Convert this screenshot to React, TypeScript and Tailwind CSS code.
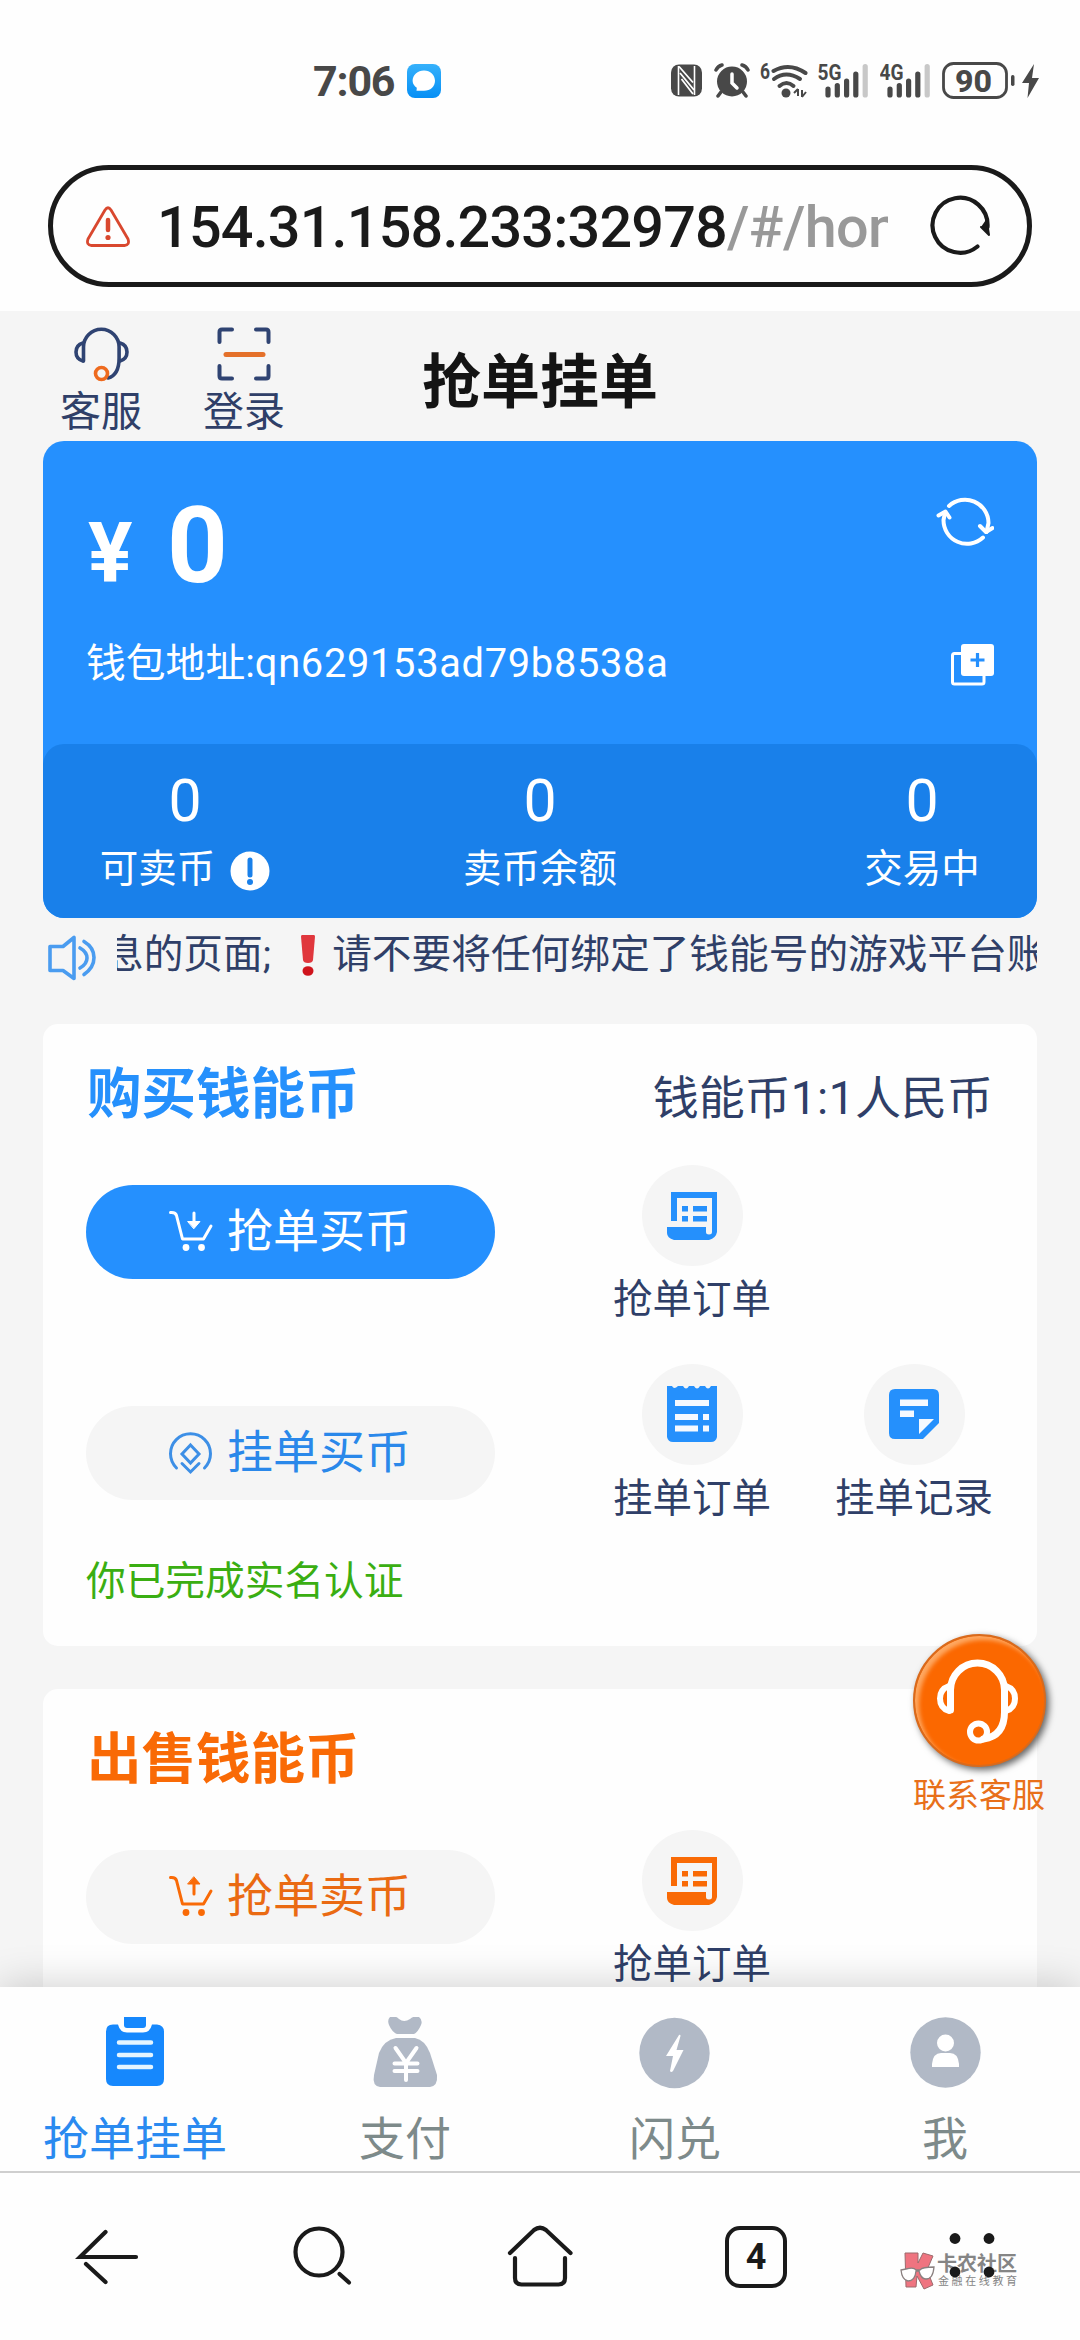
import React from "react";

const BLUE = "#2590fc";
const ORANGE = "#f96a06";
const GRAY = "#b1b9c6";
const INK = "#1a1a1a";

function StatusBar() {
  return (
    <div className="flex h-[165px] shrink-0 items-start pt-[60px] pr-[41px] pl-[313px] text-[#484848]">
      <span className="w-[94px] text-[43px] leading-[43px] font-bold tracking-[-1.2px]">7:06</span>
      <svg className="mt-[4px] h-[34px] w-[34px]" viewBox="0 0 34 34">
        <defs>
          <linearGradient id="chat" x1="0" y1="0" x2="0" y2="1">
            <stop offset="0" stopColor="#36b1fb" />
            <stop offset="1" stopColor="#068ff5" />
          </linearGradient>
        </defs>
        <rect width="34" height="34" rx="8" fill="url(#chat)" />
        <path d="M17 6.5c6.4 0 11 4.400 11 10.300s-4.600 10-11 10h-7.500l.3-3C7.500 22.200 5.600 19.800 5.600 16.800 5.600 10.900 10.600 6.500 17 6.500z" fill="#fff" />
      </svg>
      <div className="ml-auto flex">
        <svg className="h-[42px] w-[31px]" viewBox="671 60 31 42">
          <rect x="671" y="64.500" width="31" height="32" rx="8" fill="#484848" />
          <path d="M678.500 66v29M694.500 66v29" stroke="#fff" strokeWidth="1.600" fill="none" />
          <path d="M679 66.500l14 16M681.500 79l11.500 15M680 73l14 17" stroke="#fff" strokeWidth="1.800" fill="none" />
        </svg>
        <svg className="ml-[12px] h-[42px] w-[36px]" viewBox="714 60 36 42">
          <circle cx="732" cy="81.500" r="15" fill="#484848" />
          <path d="M716 70q2-4 6-5M748 70q-2-4-6-5M721 92l-3 4M743 92l3 4" stroke="#484848" strokeWidth="3.500" strokeLinecap="round" fill="none" />
          <path d="M732 74v9l5 5" stroke="#fff" strokeWidth="3.500" strokeLinecap="round" fill="none" />
        </svg>
        <svg className="ml-[10px] h-[42px] w-[48px]" viewBox="760 60 48 42">
          <text x="760" y="79" fontSize="22" fontWeight="700" fill="#484848" textLength="10" lengthAdjust="spacingAndGlyphs">6</text>
          <path d="M773.500 71q16-9 32 2" stroke="#484848" strokeWidth="4" strokeLinecap="round" fill="none" />
          <path d="M774 79q12-9 26 0M779.500 86q7-6 14 0" stroke="#484848" strokeWidth="4" strokeLinecap="round" fill="none" />
          <circle cx="786" cy="93" r="4.500" fill="#484848" />
          <path d="M798 89v7M794 93l4-4M802 90v7M802 97l4-5" stroke="#484848" strokeWidth="2" fill="none" />
        </svg>
        <Signal label="5G" className="ml-[10px]" />
        <Signal label="4G" className="ml-[12px]" />
        <svg className="ml-[12px] h-[42px] w-[97px]" viewBox="942 60 97 42">
          <rect x="943.500" y="63.500" width="63" height="34" rx="10" fill="none" stroke="#484848" strokeWidth="2.800" />
          <text x="955" y="91.500" fontSize="31" fontWeight="800" fill="#484848" textLength="37" lengthAdjust="spacingAndGlyphs">90</text>
          <rect x="1011" y="75" width="3.500" height="11" rx="1.700" fill="#484848" />
          <path d="M1034 64L1022 83h7l-1.500 15L1039 78h-7z" fill="#484848" />
        </svg>
      </div>
    </div>
  );
}

function Signal({ label, className }: { label: string; className: string }) {
  return (
    <svg className={"h-[42px] w-[50px] " + className} viewBox="818 60 50 42">
      <text x="817.500" y="80" fontSize="22" fontWeight="700" fill="#484848" textLength="24" lengthAdjust="spacingAndGlyphs">{label}</text>
      <path d="M828 89v6M837.300 85.500v9.500M846.600 81v14M855.800 74v21" stroke="#484848" strokeWidth="5.200" strokeLinecap="round" />
      <path d="M865.200 66.500V95" stroke="#c8c8c8" strokeWidth="5.200" strokeLinecap="round" />
    </svg>
  );
}

function AddressBar() {
  return (
    <div className="mx-[48px] mb-[24px] flex h-[122px] shrink-0 items-center rounded-full border-[5px] border-[#1a1a1a] pl-[33px] pr-[36px]">
      <svg className="h-[42px] w-[44px]" viewBox="86 204 44 42" fill="none" stroke="#d9482f" strokeWidth="2.800">
        <path d="M105 209q3-4.500 6 0l17 29q2 6-3.500 6.500h-33Q86 244 88 238z" strokeLinejoin="round" />
        <path d="M108 219v10" strokeWidth="4.500" strokeLinecap="round" />
        <circle cx="108" cy="236.500" r="2.600" fill="#d9482f" stroke="none" />
      </svg>
      <div className="mt-[4px] ml-[27px] w-[731px] overflow-hidden text-[57.500px] leading-[80px] font-medium whitespace-nowrap text-[#1a1a1a]">
        <span className="tracking-[-0.800px]">154.31.158.233:32978</span>
        <span className="tracking-[-0.600px] text-[#999]">/#/hom</span>
      </div>
      <svg className="ml-auto h-[62px] w-[62px]" viewBox="929 196 62 62" fill="none" stroke={INK} strokeWidth="4.200" strokeLinecap="round">
        <path d="M977.500 247.500A27.500 27.500 0 1 1 987.500 228" />
        <path d="M986.500 220l2.500 16-8-8" fill={INK} strokeWidth="2" strokeLinejoin="round" />
      </svg>
    </div>
  );
}

function Headset() {
  return (
    <svg className="h-[56px] w-[56px]" viewBox="73 326 56 56" fill="none" stroke="#2f4372" strokeWidth="3.600" strokeLinecap="round">
      <path d="M83.500 361V347a17.800 17.800 0 0 1 35.600 0v11q0 17-11 20" />
      <path d="M83 343q-7 2-7 9t7 9M120 343q7 2 7 9t-7 9" />
      <circle cx="101.500" cy="373.500" r="6" stroke="#ee6a1e" />
    </svg>
  );
}

function ScanIcon() {
  return (
    <svg className="h-[56px] w-[56px]" viewBox="216 326 56 56" fill="none" stroke="#2f4372" strokeWidth="4" strokeLinecap="round">
      <path d="M219.500 342V332q0-2.500 2.500-2.500h10M256 329.500h10q2.500 0 2.500 2.500v10M268.500 366v10q0 2.500-2.500 2.500h-10M232 378.500h-10q-2.500 0-2.500-2.500v-10" />
      <path d="M226 354.500h37" stroke="#e4702a" strokeWidth="5" />
    </svg>
  );
}

function Header() {
  return (
    <div className="grid h-[130px] grid-cols-[1fr_auto_1fr] pt-[15px]">
      <div className="flex gap-[53px] pl-[56px]">
        <div className="flex w-[90px] flex-col items-center">
          <Headset />
          <span className="mt-[5px] text-[41px] leading-[50px] text-[#2f3f68]">客服</span>
        </div>
        <div className="flex w-[90px] flex-col items-center">
          <ScanIcon />
          <span className="mt-[5px] text-[41px] leading-[50px] text-[#2f3f68]">登录</span>
        </div>
      </div>
      <h1 className="mt-[22px] text-[59px] leading-[70px] font-bold text-[#141414]">抢单挂单</h1>
      <div />
    </div>
  );
}

function Stat({ label, className, info }: { label: string; className: string; info?: boolean }) {
  return (
    <div className={"flex flex-col items-center pt-[27px] " + className}>
      <span className="text-[59px] leading-[60px]">0</span>
      <span className="mt-[13px] flex items-center text-[38.500px] leading-[50px]">
        {label}
        {info && (
          <svg className="mt-[3px] ml-[15px] h-[40px] w-[40px]" viewBox="0 0 40 40">
            <circle cx="20" cy="20" r="19.500" fill="#fff" />
            <path d="M20 9v15" stroke="#1980ea" strokeWidth="5" strokeLinecap="round" />
            <circle cx="20" cy="31" r="3" fill="#1980ea" />
          </svg>
        )}
      </span>
    </div>
  );
}

function WalletCard() {
  return (
    <div className="mx-[43px] h-[477px] overflow-hidden rounded-[21px] bg-[#2590fe] text-white">
      <div className="flex h-[303px] flex-col pr-[43px] pl-[43px]">
        <div className="mt-[50px] flex h-[110px] items-baseline font-bold">
          <span className="w-[81px] pl-[2px] text-[83px] leading-[110px]">¥</span>
          <span className="text-[106px] leading-[110px]">0</span>
          <svg className="ml-auto h-[58px] w-[58px] -translate-y-[31px]" viewBox="936 493 58 58" fill="none" stroke="#fff" strokeWidth="4" strokeLinecap="round" strokeLinejoin="round">
            <path d="M949 506a23.500 23.500 0 0 1 39.500 17l-2 9M983 537.500A23.500 23.500 0 0 1 943.500 520l1.500-7" />
            <path d="M938.500 515.500l7-4 4 6M980 526l6 6 6.500-4" />
          </svg>
        </div>
        <div className="mt-[38px] flex h-[50px] items-center">
          <span className="text-[39.800px] leading-[50px]">
            钱包地址:<span className="tracking-[0.700px]">qn629153ad79b8538a</span>
          </span>
          <svg className="mt-[2px] ml-auto h-[42px] w-[43px]" viewBox="0 0 43 42">
            <path d="M10 9.500H3.500q-2 0-2 2V38q0 2 2 2H31q2 0 2-2v-6" fill="none" stroke="#fff" strokeWidth="3" />
            <rect x="10" y="0" width="33" height="32" rx="3" fill="#fff" />
            <path d="M26.500 9v14M19.500 16h14" stroke="#2590fe" strokeWidth="3.200" />
          </svg>
        </div>
      </div>
      <div className="flex h-[174px] rounded-[21px] bg-[#1980ea]">
        <Stat label="可卖币" className="w-[284px]" info />
        <Stat label="卖币余额" className="w-[426px]" />
        <Stat label="交易中" className="w-[284px] pl-[54px]" />
      </div>
    </div>
  );
}

function Notice() {
  return (
    <div className="mr-[43px] ml-[47px] flex h-[106px] items-start pt-[11px]">
      <svg className="mt-[4px] h-[52px] w-[52px] shrink-0" viewBox="47 933 52 52" fill="none" stroke="#4a9cf0" strokeWidth="3.600" strokeLinecap="round" strokeLinejoin="round">
        <path d="M50 946.500h13l11-9v41l-11-8H50z" />
        <path d="M80 948q7 4 7 10t-7 10M84 941.500q10 6 10 16t-10 17" />
      </svg>
      <div className="ml-[18px] flex w-[920px] items-center overflow-hidden text-[39.700px] leading-[52px] whitespace-nowrap text-[#2f3f68]">
        <span className="-ml-[13px]">息的页面;</span>
        <svg className="mr-[15px] ml-[28px] h-[42px] w-[18px] shrink-0" viewBox="0 0 18 42">
          <path d="M3 1h12q1 0 1 1.500L14 26q-.5 3-5 3t-5-3L2 2.500Q2 1 3 1z" fill="#e0373d" />
          <ellipse cx="9" cy="37" rx="5.500" ry="4.800" fill="#cf141c" />
        </svg>
        <span>请不要将任何绑定了钱能号的游戏平台账</span>
      </div>
    </div>
  );
}

function CartIcon({ color, up }: { color: string; up?: boolean }) {
  return (
    <svg className="h-[46px] w-[46px]" viewBox="168 1208 46 46" fill="none" stroke={color} strokeWidth="3" strokeLinecap="round" strokeLinejoin="round">
      <path d="M170.500 1212.500q5-.5 6 3l6 23.500q20.500 0 21 0l7.500-13" />
      <circle cx="186" cy="1247.500" r="3.400" fill={color} stroke="none" />
      <circle cx="201.500" cy="1247.500" r="3.400" fill={color} stroke="none" />
      {up ? (
        <>
          <path d="M194 1229v-11" />
          <path d="M188 1219h12l-6-7z" fill={color} strokeWidth="1" />
        </>
      ) : (
        <>
          <path d="M194 1213v11" />
          <path d="M188 1221.500h12l-6 7z" fill={color} strokeWidth="1" />
        </>
      )}
    </svg>
  );
}

function CoinIcon() {
  return (
    <svg className="h-[46px] w-[46px]" viewBox="168 1429 46 46" fill="none" stroke="#3d8fe6" strokeWidth="3" strokeLinecap="round">
      <path d="M176.500 1468a20 20 0 1 1 28 0" />
      <path d="M190.500 1445l8.500 9-8.500 9-8.500-9zM182 1463.500l8.500 8.500 8.500-8.500" />
    </svg>
  );
}

function ScrollIcon({ color }: { color: string }) {
  return (
    <svg className="-ml-[1px] h-[48px] w-[50px]" viewBox="0 0 50 48" fill={color}>
      <path d="M4 0H50V40Q49 46 42 48H7Q0 46 0 41V35H39V40Q39 42.500 42 42.500Q45 42.500 45 40V6H10V29H4Z" />
      <path d="M15 14h6v5.500h-6zM26 14h14v5.500H26zM15 24h6v5.500h-6zM26 24h14v5.500H26z" />
    </svg>
  );
}

function ReceiptIcon() {
  return (
    <svg className="-mt-[1px] -ml-[1px] h-[56px] w-[50px]" viewBox="0 0 50 56">
      <path d="M0 0h5q2 4 6 0h5q3 5 6 0h5q3 5 6 0h5q3 5 6 0h6v51q-1 5-6 5H6q-5 0-6-5z" fill={BLUE} />
      <path d="M8 14h34v6H8zM8 28h23v6H8zM36 28h6v6h-6zM8 39.500h23v6H8zM36 39.500h6v6h-6z" fill="#f5f9ff" />
    </svg>
  );
}

function NoteIcon() {
  return (
    <svg className="-mt-[1px] -ml-[1px] h-[50px] w-[50px]" viewBox="0 0 50 50">
      <path d="M6 0h38q6 0 6 6v28L34 50H6q-6 0-6-6V6q0-6 6-6z" fill={BLUE} />
      <path d="M11 10.500h28v6.500H11zM11 21.500h14v6.500H11zM30 30h15L30 45z" fill="#f5f9ff" />
    </svg>
  );
}

function Shortcut({ label, children }: { label: string; children: React.ReactNode }) {
  return (
    <div className="flex w-[160px] flex-col items-center">
      <div className="flex h-[101px] w-[101px] items-center justify-center rounded-full bg-[#f5f5f5]">{children}</div>
      <span className="mt-[10px] text-[39.500px] leading-[48px] whitespace-nowrap text-[#2f3f68]">{label}</span>
    </div>
  );
}

function Pill({ label, className, children }: { label: string; className: string; children: React.ReactNode }) {
  return (
    <div className={"mr-[117px] flex h-[94px] w-[409px] shrink-0 items-center pl-[82px] rounded-full " + className}>
      <span className="-mt-[2px] h-[46px]">{children}</span>
      <span className="-mt-[3px] ml-[13px] text-[46px] leading-[60px]">{label}</span>
    </div>
  );
}

function TradeCards() {
  return (
    <>
      <div className="mx-[43px] h-[622px] rounded-[15px] bg-[#fefefe] pl-[43px]">
        <div className="flex h-[134px] items-center justify-between pr-[44px]">
          <h2 className="mt-[5px] pl-[1px] text-[54.500px] leading-[60px] font-bold text-[#2590fc]">购买钱能币</h2>
          <span className="mt-[13px] text-[46px] leading-[60px] text-[#2f3f68]">
            钱能币<span className="tracking-[0.500px]">1:1</span>人民币
          </span>
        </div>
        <div className="flex h-[206px] pt-[7px]">
          <Pill label="抢单买币" className="mt-[20px] bg-[#2590fe] text-white">
            <CartIcon color="#fff" />
          </Pill>
          <Shortcut label="抢单订单">
            <ScrollIcon color={BLUE} />
          </Shortcut>
        </div>
        <div className="flex h-[192px]">
          <Pill label="挂单买币" className="mt-[42px] bg-[#f5f5f5] text-[#2a88ea]">
            <CoinIcon />
          </Pill>
          <div className="flex gap-[62px]">
            <Shortcut label="挂单订单">
              <ReceiptIcon />
            </Shortcut>
            <Shortcut label="挂单记录">
              <NoteIcon />
            </Shortcut>
          </div>
        </div>
        <p className="text-[39.700px] leading-[52px] text-[#3aae12]">你已完成实名认证</p>
      </div>
      <div className="mx-[43px] mt-[43px] h-[622px] rounded-[15px] bg-[#fefefe] pl-[43px]">
        <div className="flex h-[134px] items-center">
          <h2 className="mt-[5px] pl-[1px] text-[54.500px] leading-[60px] font-bold text-[#f96a06]">出售钱能币</h2>
        </div>
        <div className="flex h-[206px] pt-[7px]">
          <Pill label="抢单卖币" className="mt-[20px] bg-[#f5f5f5] text-[#ea6a12]">
            <CartIcon color={ORANGE} up />
          </Pill>
          <Shortcut label="抢单订单">
            <ScrollIcon color={ORANGE} />
          </Shortcut>
        </div>
      </div>
    </>
  );
}

function SupportButton() {
  return (
    <div className="absolute top-[1323px] right-[29px] flex w-[144px] flex-col items-center">
      <div className="flex h-[133px] w-[133px] items-center justify-center rounded-full border-2 border-[#d96a1c] bg-[#fb6800] shadow-[3px_3px_7px_rgba(0,0,0,0.6),inset_4px_4px_4px_rgba(255,190,130,0.75)]">
        <svg className="h-[90px] w-[90px]" viewBox="933 1655 90 90" fill="none" stroke="#fff" strokeWidth="7" strokeLinecap="round">
          <path d="M949.500 1709v-20a27 27 0 0 1 54 0v22q0 24-21 27" />
          <path d="M948 1685q-9 3-9 12.500t9 12.500M1005 1685q9 3 9 12.500t-9 12.500" strokeWidth="6" />
          <circle cx="977.500" cy="1731" r="8.500" strokeWidth="6" />
        </svg>
      </div>
      <span className="mt-[9px] text-[33px] leading-[40px] whitespace-nowrap text-[#e8701a]">联系客服</span>
    </div>
  );
}

function Tab({ label, active, children }: { label: string; active?: boolean; children: React.ReactNode }) {
  return (
    <div className="flex w-[270px] flex-col items-center pt-[30px]">
      <svg className="h-[74px] w-[74px]" viewBox="0 0 74 74">{children}</svg>
      <span className={"mt-[18px] text-[46px] leading-[60px] " + (active ? "text-[#2a8af0]" : "text-[#7d8a8a]")}>{label}</span>
    </div>
  );
}

function TabBar() {
  return (
    <div className="relative flex h-[186px] shrink-0 border-b-2 border-[#cfcfcf] bg-[#fefefe] shadow-[0_0_40px_rgba(0,0,0,0.2)] [clip-path:inset(-60px_0_0_0)]">
      <Tab label="抢单挂单" active>
        <path d="M15 7.500h5q2 8 9 8h16q7 0 9-8h5q7 1 7 7V62q0 7-7 7H15q-7 0-7-7V14.500q0-7 7-7z" fill="#1688fd" />
        <path d="M26 0h22v8q0 3-3 3H29q-3 0-3-3z" fill="#1688fd" />
        <path d="M21 25.500h32M21 38h32M21 50h32" stroke="#e4f5ff" strokeWidth="4.500" strokeLinecap="round" />
      </Tab>
      <Tab label="支付">
        <path d="M22 0q5-2 9 2 5 4 11 0 5-4 9-2 4 3 2 8-3 7-7 9H29q-5-2-8-9-2-5 1-8z" fill={GRAY} />
        <path d="M28 21h19q10 2 15 15l7 22q1 11-7 12H12q-8-1-6-12l5-22q5-13 17-15z" fill={GRAY} />
        <path d="M27.500 31L38 46l10.500-15M38 46v17M26.500 46.500h23M26.500 54h23" stroke="#fff" strokeWidth="4" strokeLinecap="round" fill="none" />
      </Tab>
      <Tab label="闪兑">
        <circle cx="36.500" cy="36" r="35.200" fill={GRAY} />
        <path d="M41 18L28 39h7l-3 15q1 2 3 0L45.500 33h-7l4-14q0-2-1.500-1z" fill="#fff" />
      </Tab>
      <Tab label="我">
        <circle cx="37.500" cy="35.500" r="35.200" fill={GRAY} />
        <circle cx="37.500" cy="26" r="8.500" fill="#fff" />
        <path d="M24 50v-3q1-11 9-11h9q8 0 9 11v3z" fill="#fff" />
      </Tab>
    </div>
  );
}

function BrowserNav() {
  return (
    <div className="flex h-[167px] shrink-0 items-start bg-[#fefefe] pt-[49px] pl-[75px]">
      <svg className="h-[70px] w-[66px]" viewBox="75 2222 66 70" fill="none" stroke={INK} strokeWidth="4.200" strokeLinecap="round">
        <path d="M105.500 2232L80 2257h56M86 2264l19.500 18" />
      </svg>
      <svg className="ml-[146px] h-[70px] w-[70px]" viewBox="287 2222 70 70" fill="none" stroke={INK} strokeWidth="4.200" strokeLinecap="round">
        <circle cx="319" cy="2252" r="23.500" />
        <path d="M339.500 2274l9.500 8.500" />
      </svg>
      <svg className="ml-[148px] h-[70px] w-[70px]" viewBox="505 2222 70 70" fill="none" stroke={INK} strokeWidth="4.200" strokeLinecap="round">
        <path d="M510 2253l24-23q6-4.500 12 0l24.500 23" />
        <path d="M515 2258v20q0 6.500 6.500 6.500h37q6.500 0 6.500-6.500v-20" />
      </svg>
      <div className="mt-[4px] ml-[150px] flex h-[62px] w-[62px] items-center justify-center rounded-[15px] border-[4.200px] border-[#1a1a1a] text-[36px] leading-[50px] font-bold text-[#1a1a1a]">4</div>
      <div className="relative ml-[113px] h-[70px] w-[125px]">
        <svg className="absolute top-[30px] left-0 h-[38px] w-[36px]" viewBox="0 0 36 38">
          <path d="M5 1h13v10l5-10 10 3-6 14 6 15-9 4-7-13-1 11H6z" fill="#ef7480" stroke="#9c6a6c" strokeWidth="1" />
          <path d="M1 18l5-1q8-2 10 1l4 0q2-3 14-3-1 12-8 12-5 0-7-8h-3q-1 10-8 10-6-1-7-11z" fill="#fff" stroke="#8a8080" strokeWidth="1.300" />
        </svg>
        <div className="absolute top-[31px] left-[37px] flex w-[84px] flex-col text-[#858585]">
          <span className="text-[20px] leading-[23px] font-bold whitespace-nowrap">卡农社区</span>
          <span className="pl-[1px] text-[11px] leading-[12px] tracking-[2.600px] whitespace-nowrap">金融在线教育</span>
        </div>
        <svg className="absolute top-0 left-[42px] h-[60px] w-[60px]" viewBox="942 2222 60 60" fill={INK}>
          <circle cx="955" cy="2238.500" r="5.400" />
          <circle cx="989" cy="2238.500" r="5.400" />
          <circle cx="955" cy="2272" r="5.400" />
          <circle cx="989" cy="2272" r="5.400" />
        </svg>
      </div>
    </div>
  );
}

export default function App() {
  return (
    <div className="flex h-[2340px] w-[1080px] flex-col overflow-hidden bg-[#fefefe] font-['Roboto','Noto_Sans_CJK_SC',sans-serif]">
      <StatusBar />
      <AddressBar />
      <main className="relative h-[1676px] shrink-0 overflow-hidden bg-[#f5f5f5]">
        <Header />
        <WalletCard />
        <Notice />
        <TradeCards />
        <SupportButton />
      </main>
      <TabBar />
      <BrowserNav />
    </div>
  );
}
